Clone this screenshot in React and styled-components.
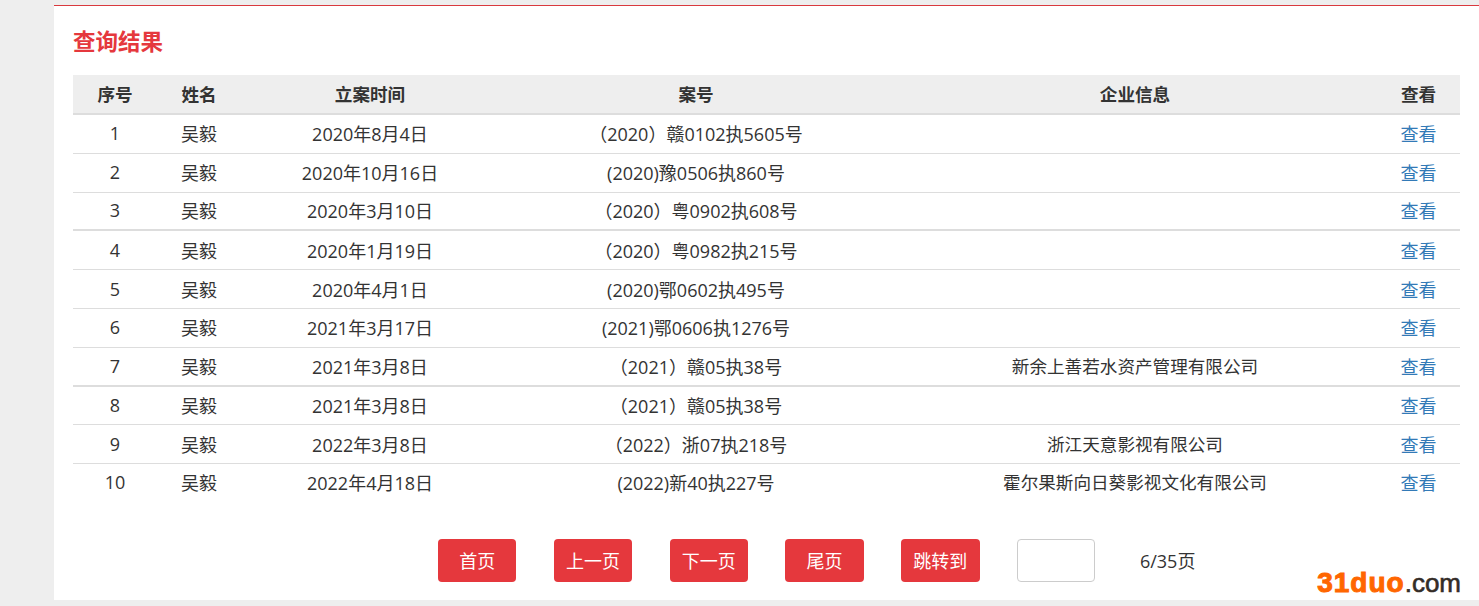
import React from "react";
import { createGlobalStyle, styled } from "styled-components";

const rows = [
  ["1", "2020年8月4日", "（2020）赣0102执5605号", ""],
  ["2", "2020年10月16日", "(2020)豫0506执860号", ""],
  ["3", "2020年3月10日", "（2020）粤0902执608号", ""],
  ["4", "2020年1月19日", "（2020）粤0982执215号", ""],
  ["5", "2020年4月1日", "(2020)鄂0602执495号", ""],
  ["6", "2021年3月17日", "(2021)鄂0606执1276号", ""],
  ["7", "2021年3月8日", "（2021）赣05执38号", "新余上善若水资产管理有限公司"],
  ["8", "2021年3月8日", "（2021）赣05执38号", ""],
  ["9", "2022年3月8日", "（2022）浙07执218号", "浙江天意影视有限公司"],
  ["10", "2022年4月18日", "(2022)新40执227号", "霍尔果斯向日葵影视文化有限公司"],
];

const pagerButtons = ["首页", "上一页", "下一页", "尾页", "跳转到"];

function App() {
  return (
    <Page>
      <GlobalStyle />
      <TopRule />
      <Panel>
        <Title>查询结果</Title>
        <ResultTable>
          <colgroup>
            <col width="84" />
            <col width="84" />
            <col width="258" />
            <col width="394" />
            <col width="484" />
            <col width="83" />
          </colgroup>
          <thead>
            <tr>
              <HeadCell>序号</HeadCell>
              <HeadCell>姓名</HeadCell>
              <HeadCell>立案时间</HeadCell>
              <HeadCell>案号</HeadCell>
              <HeadCell>企业信息</HeadCell>
              <HeadCell>查看</HeadCell>
            </tr>
          </thead>
          <tbody>
            {rows.map((row) => {
              const heavy = row[0] === "3" || row[0] === "7";
              return (
                <Row key={row[0]}>
                  <Cell $heavy={heavy}>{row[0]}</Cell>
                  <Cell $heavy={heavy}>吴毅</Cell>
                  <Cell $heavy={heavy}>{row[1]}</Cell>
                  <Cell $heavy={heavy}>{row[2]}</Cell>
                  <Cell $heavy={heavy} $compact>{row[3]}</Cell>
                  <Cell $heavy={heavy}>
                    <ViewLink href="#">查看</ViewLink>
                  </Cell>
                </Row>
              );
            })}
          </tbody>
        </ResultTable>
        <Pager>
          {pagerButtons.map((label) => (
            <PageButton key={label}>{label}</PageButton>
          ))}
          <JumpInput />
          <PageInfo>6/35页</PageInfo>
        </Pager>
      </Panel>
      <Watermark>
        <b>31duo</b>
        <span>.com</span>
      </Watermark>
    </Page>
  );
}

const GlobalStyle = createGlobalStyle`
  html, body {
    margin: 0;
    padding: 0;
    background: #eeeeee;
  }
`;

const Page = styled.div`
  position: relative;
  width: 1479px;
  height: 606px;
  overflow: hidden;
  background: #eeeeee;
  color: #333333;
  font-family: "Open Sans", "Noto Sans CJK SC", sans-serif;
  font-size: 18px;
`;

const TopRule = styled.div`
  height: 1px;
  margin: 5px 0 0 54px;
  background: #d9393e;
`;

const Panel = styled.div`
  box-sizing: border-box;
  height: 594px;
  margin-left: 54px;
  padding: 18px 19px 0;
  background: #ffffff;
`;

const Title = styled.h2`
  margin: 0 0 15px;
  height: 36px;
  line-height: 36px;
  font-size: 22.5px;
  font-weight: 700;
  color: #e5383d;
`;

const ResultTable = styled.table`
  width: 1387px;
  table-layout: fixed;
  border-collapse: separate;
  border-spacing: 0;
`;

const HeadCell = styled.th`
  box-sizing: border-box;
  height: 40px;
  padding: 0 0 1px;
  background: #eeeeee;
  border-bottom: 2px solid #dddddd;
  font-size: 17.6px;
  font-weight: 700;
  text-align: center;
`;

const Row = styled.tr`
  height: 38.8px;
  &:last-child td {
    border-bottom: 0;
    padding-bottom: 4px;
  }
`;

const Cell = styled.td`
  box-sizing: border-box;
  padding: 0 0 1px;
  border-bottom: ${(p) => (p.$heavy ? "2px" : "1px")} solid #dddddd;
  font-size: ${(p) => (p.$compact ? "17.6px" : "18px")};
  text-align: center;
  white-space: nowrap;
`;

const ViewLink = styled.a`
  color: #337ab7;
  text-decoration: none;
`;

const Pager = styled.div`
  display: flex;
  align-items: center;
  margin: 36px 0 0 365px;
`;

const PageButton = styled.button`
  box-sizing: border-box;
  width: 78.4px;
  height: 43px;
  margin-right: 37.4px;
  padding: 0 0 1px;
  border: 0;
  border-radius: 4px;
  background: #e5383d;
  color: #ffffff;
  font: inherit;
`;

const JumpInput = styled.input`
  box-sizing: border-box;
  width: 78px;
  height: 43px;
  border: 1px solid #cccccc;
  border-radius: 4px;
  background: #ffffff;
`;

const PageInfo = styled.span`
  margin-left: 45px;
`;

const Watermark = styled.div`
  position: absolute;
  right: 18px;
  bottom: 9px;
  font-family: "Liberation Sans", sans-serif;
  font-size: 26px;
  line-height: 28px;
  white-space: nowrap;
  color: #332c27;
  -webkit-text-stroke: 0.6px currentColor;

  b {
    color: #ff6600;
    font-size: 28px;
    font-weight: 700;
    letter-spacing: 1px;
    -webkit-text-stroke: 1px currentColor;
  }
`;

export default App;
